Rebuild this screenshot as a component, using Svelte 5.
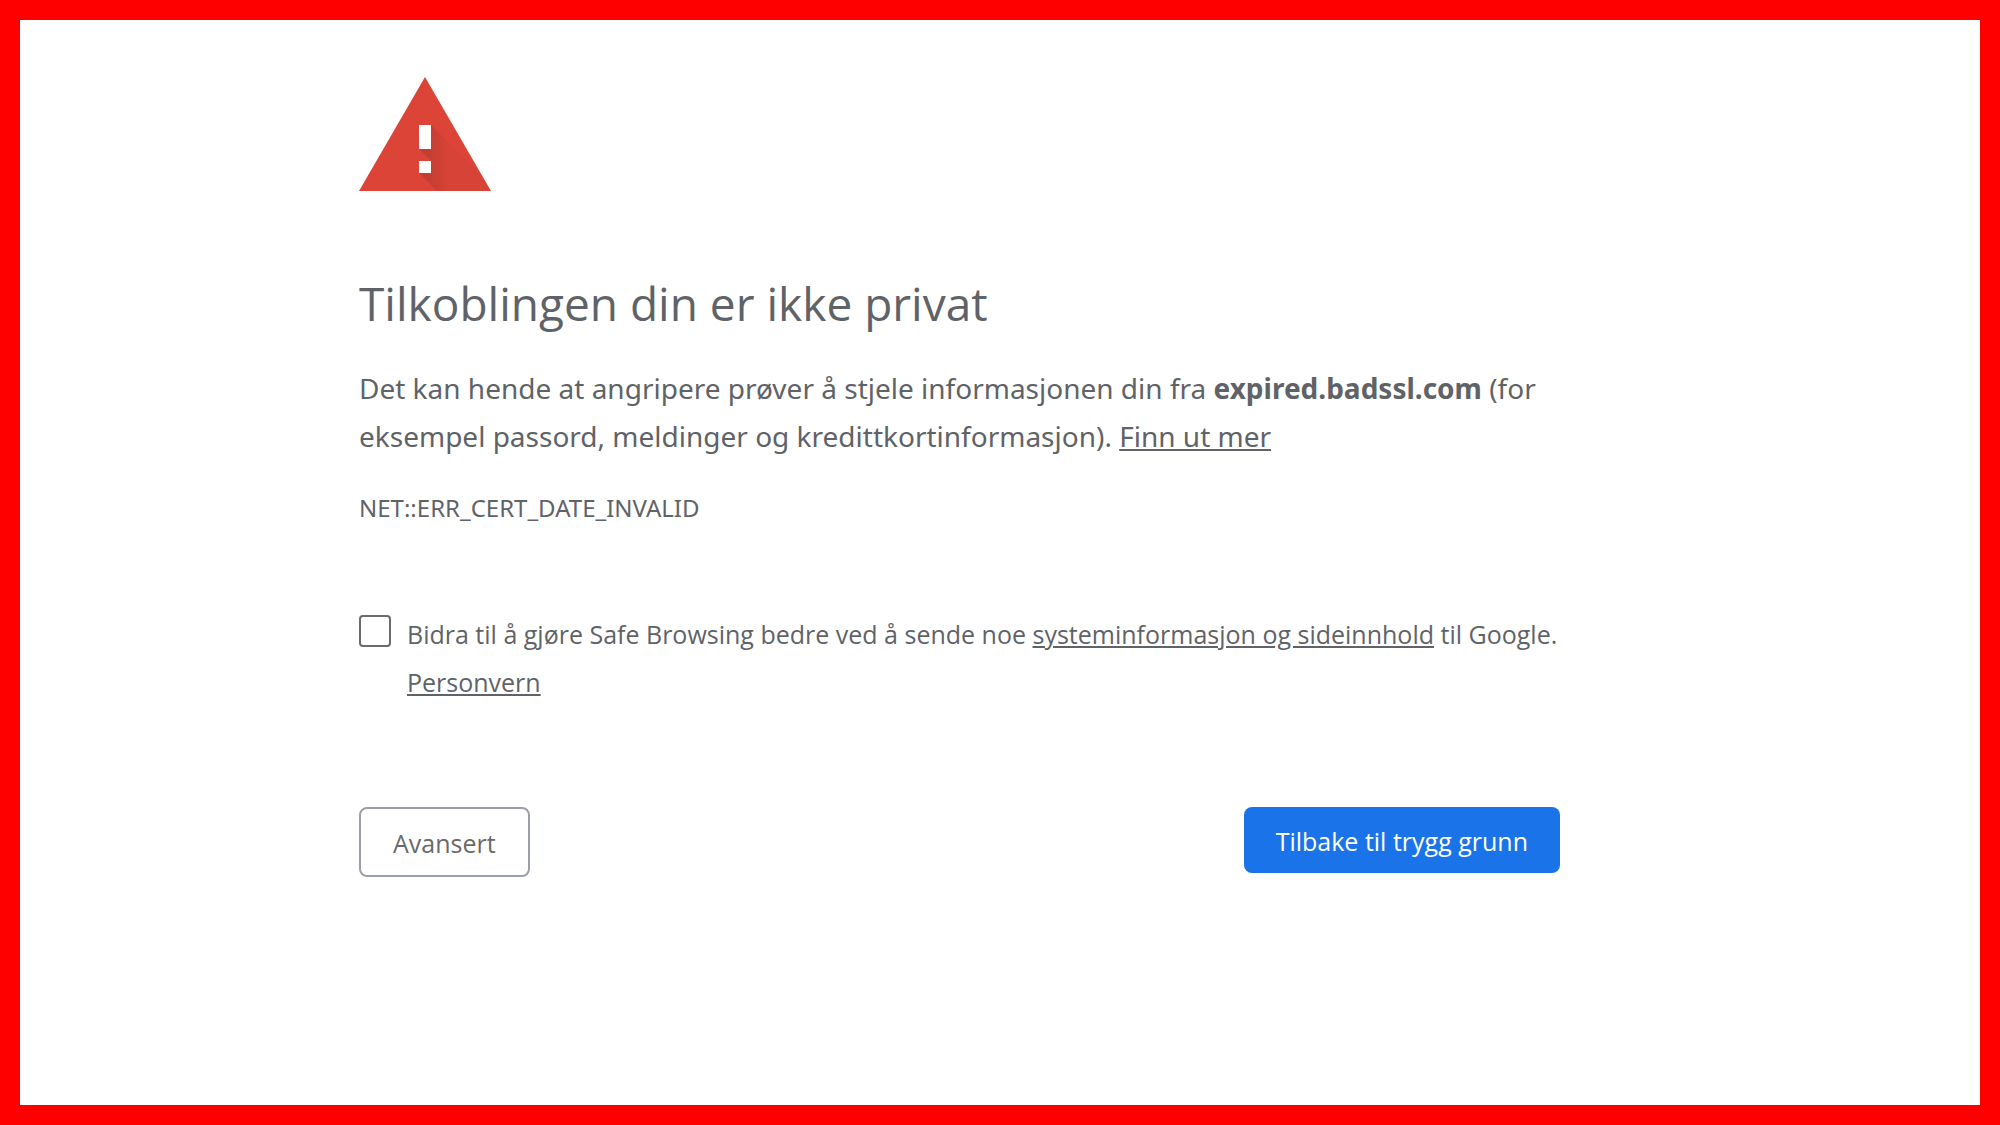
<script lang="ts">
    const host = "expired.badssl.com";
    const errorCode = "NET::ERR_CERT_DATE_INVALID";

    let reporting = $state(false);
</script>

<svelte:head>
    <title>Personvernfeil</title>
</svelte:head>

<div class="page">
    <main class="interstitial">
        <svg class="icon" viewBox="0 0 132 114" aria-hidden="true">
            <defs>
                <linearGradient id="shade" gradientUnits="userSpaceOnUse" x1="68" y1="0" x2="90" y2="0">
                    <stop offset="0" stop-color="#7d2a21" stop-opacity="0.26" />
                    <stop offset="1" stop-color="#7d2a21" stop-opacity="0.04" />
                </linearGradient>
                <clipPath id="triangle"><path d="M66 0l66 114H0z" /></clipPath>
            </defs>
            <path d="M66 0l66 114H0z" fill="#db4437" />
            <g clip-path="url(#triangle)" fill="url(#shade)">
                <path d="M72 48l66 66H102L60 72h12z" />
                <path d="M72 84l30 30H78L60 96h12z" />
            </g>
            <path d="M60 48h12v24H60zM60 84h12v12H60z" fill="#fff" />
        </svg>

        <h1>Tilkoblingen din er ikke privat</h1>

        <p class="message">
            Det kan hende at angripere prøver å stjele informasjonen din fra <strong>{host}</strong> (for eksempel
            passord, meldinger og kredittkortinformasjon). <a href="#learn-more">Finn ut mer</a>
        </p>

        <div class="error-code">{errorCode}</div>

        <div class="opt-in">
            <input id="report" type="checkbox" bind:checked={reporting} />
            <label for="report">
                Bidra til å gjøre Safe Browsing bedre ved å sende noe
                <a href="#report-details">systeminformasjon og sideinnhold</a> til Google.
                <a href="#privacy">Personvern</a>
            </label>
        </div>

        <div class="actions">
            <button type="button" class="secondary">Avansert</button>
            <button type="button" class="primary">Tilbake til trygg grunn</button>
        </div>
    </main>
</div>

<style>
    :global(body) {
        background: #fff;
    }

    .page {
        min-height: 100vh;
        box-sizing: border-box;
        border: 20px solid #f00;
        padding: 57px 81px 57px 0;
        color: #5f6368;
        font-family: "Segoe UI", "Open Sans", sans-serif;
        font-size: 25px;
        line-height: 48px;
    }

    .interstitial {
        max-width: 1201px;
        margin: 0 auto;
    }

    .icon {
        display: block;
        width: 132px;
        height: 114px;
    }

    h1 {
        margin: 83px 0 32px;
        font-size: 46px;
        font-weight: 400;
        line-height: 58px;
    }

    .message,
    .error-code {
        font-family: "Segoe UI", "Noto Sans", sans-serif;
    }

    .message {
        margin: 0 0 24px;
        font-size: 28px;
    }

    .error-code {
        font-size: 24px;
    }

    a {
        color: inherit;
        text-decoration: underline;
    }

    .opt-in {
        display: flex;
        align-items: flex-start;
        gap: 16px;
        margin-top: 78px;
    }

    .opt-in input {
        appearance: none;
        flex-shrink: 0;
        box-sizing: border-box;
        width: 32px;
        height: 32px;
        margin: 5px 0 0;
        border: 2px solid #6b6b6b;
        border-radius: 4px;
        background: #fff;
    }

    .opt-in input:checked {
        background: #1a73e8;
    }

    .actions {
        display: flex;
        flex-wrap: wrap;
        align-items: flex-start;
        justify-content: space-between;
        gap: 16px;
        margin-top: 101px;
    }

    button {
        box-sizing: border-box;
        border: 0;
        border-radius: 8px;
        padding: 10px 32px 8px;
        font: inherit;
        cursor: pointer;
    }

    .primary {
        background: #1a73e8;
        color: #fff;
    }

    .secondary {
        border: 2px solid #9aa0a6;
        background: #fff;
        color: #696969;
    }
</style>
